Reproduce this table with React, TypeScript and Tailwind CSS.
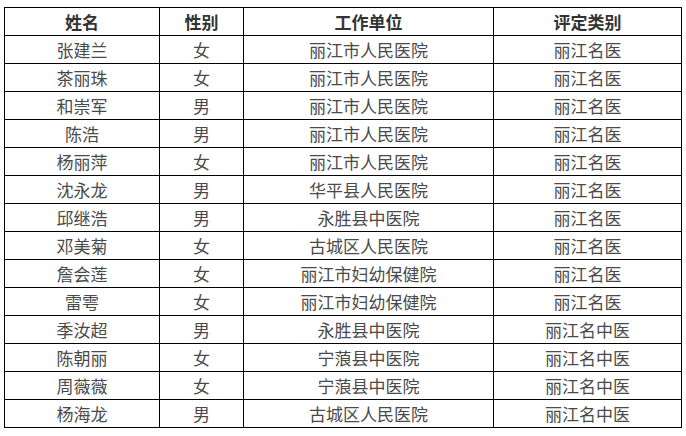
const rows: [string, string, string, string][] = [
  ["张建兰", "女", "丽江市人民医院", "丽江名医"],
  ["茶丽珠", "女", "丽江市人民医院", "丽江名医"],
  ["和崇军", "男", "丽江市人民医院", "丽江名医"],
  ["陈浩", "男", "丽江市人民医院", "丽江名医"],
  ["杨丽萍", "女", "丽江市人民医院", "丽江名医"],
  ["沈永龙", "男", "华平县人民医院", "丽江名医"],
  ["邱继浩", "男", "永胜县中医院", "丽江名医"],
  ["邓美菊", "女", "古城区人民医院", "丽江名医"],
  ["詹会莲", "女", "丽江市妇幼保健院", "丽江名医"],
  ["雷雩", "女", "丽江市妇幼保健院", "丽江名医"],
  ["季汝超", "男", "永胜县中医院", "丽江名中医"],
  ["陈朝丽", "女", "宁蒗县中医院", "丽江名中医"],
  ["周薇薇", "女", "宁蒗县中医院", "丽江名中医"],
  ["杨海龙", "男", "古城区人民医院", "丽江名中医"],
];

const cell = "border border-black h-[28px] p-0 text-center align-middle";

export default function App() {
  return (
    <div className="w-[686px] h-[436px] bg-white pt-[7px] pl-[4px] font-['Noto_Sans_CJK_SC','Microsoft_YaHei',sans-serif]">
      <table className="border-collapse table-fixed w-[677px] text-[17px] leading-none">
        <colgroup>
          <col className="w-[155px]" />
          <col className="w-[84px]" />
          <col className="w-[250px]" />
          <col className="w-[188px]" />
        </colgroup>
        <thead>
          <tr className="text-[#333] font-bold">
            <th className={cell}>姓名</th>
            <th className={cell}>性别</th>
            <th className={cell}>工作单位</th>
            <th className={cell}>评定类别</th>
          </tr>
        </thead>
        <tbody className="text-[#4a4a4a]">
          {rows.map((r) => (
            <tr key={r[0]}>
              {r.map((c, i) => (
                <td key={i} className={cell}>
                  {c}
                </td>
              ))}
            </tr>
          ))}
        </tbody>
      </table>
    </div>
  );
}
